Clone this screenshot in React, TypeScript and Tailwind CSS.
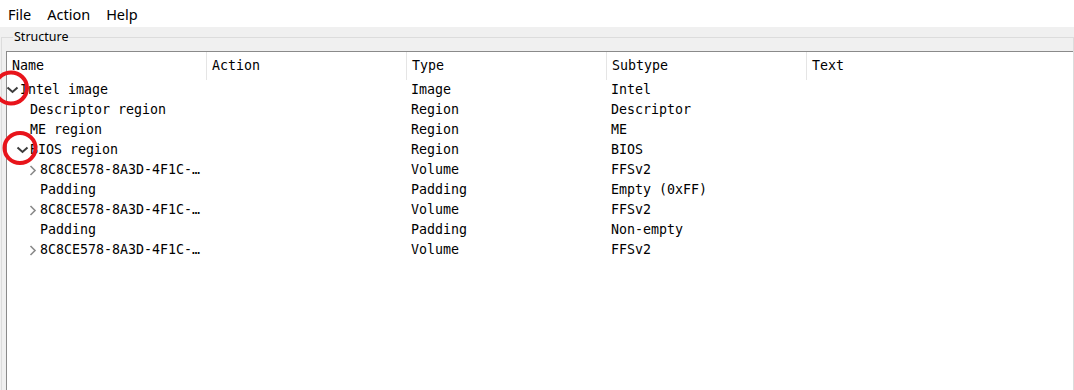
import React from "react";

type Row = {
  name: string;
  level: number;
  arrow?: "down" | "right";
  type: string;
  subtype: string;
};

const rows: Row[] = [
  { name: "Intel image", level: 0, arrow: "down", type: "Image", subtype: "Intel" },
  { name: "Descriptor region", level: 1, type: "Region", subtype: "Descriptor" },
  { name: "ME region", level: 1, type: "Region", subtype: "ME" },
  { name: "BIOS region", level: 1, arrow: "down", type: "Region", subtype: "BIOS" },
  { name: "8C8CE578-8A3D-4F1C-…", level: 2, arrow: "right", type: "Volume", subtype: "FFSv2" },
  { name: "Padding", level: 2, type: "Padding", subtype: "Empty (0xFF)" },
  { name: "8C8CE578-8A3D-4F1C-…", level: 2, arrow: "right", type: "Volume", subtype: "FFSv2" },
  { name: "Padding", level: 2, type: "Padding", subtype: "Non-empty" },
  { name: "8C8CE578-8A3D-4F1C-…", level: 2, arrow: "right", type: "Volume", subtype: "FFSv2" },
];

const columns = ["Name", "Action", "Type", "Subtype"];

function Chevron({ dir }: { dir: "down" | "right" }) {
  if (dir === "down") {
    return (
      <svg width="13" height="8" viewBox="0 0 13 8" className="block">
        <path d="M1.5 1.5 L6.5 6 L11.5 1.5" fill="none" stroke="#3c3c3c" strokeWidth="2" />
      </svg>
    );
  }
  return (
    <svg width="8" height="11" viewBox="0 0 8 11" className="block">
      <path d="M1.5 1 L6 5.5 L1.5 10" fill="none" stroke="#8a8a8a" strokeWidth="1.6" />
    </svg>
  );
}

export default function App() {
  return (
    <div className="relative w-[1074px] h-[390px] overflow-hidden bg-white flex flex-col text-black">
      {/* Menu bar */}
      <div className="h-[27px] shrink-0 flex items-center bg-white font-['Noto_Sans',sans-serif] text-[14.5px] pt-[2px]">
        <span className="px-[8px]">File</span>
        <span className="px-[8px]">Action</span>
        <span className="px-[8px]">Help</span>
      </div>

      {/* Group box */}
      <div className="flex-1 bg-[#f0f0f0] pl-[1px]">
        <fieldset className="h-[400px] border border-[#dcdcdc] pl-[4px] pt-[4px] min-w-0">
          <legend className="ml-[7px] px-[1px] leading-[20px] text-[12.5px] font-['Noto_Sans',sans-serif]">
            Structure
          </legend>

          {/* Tree widget */}
          <div className="h-[400px] bg-white border-l border-t border-[#8a8a8a] font-['DejaVu_Sans_Mono',monospace] text-[13.3px]">
            <div className="flex h-[28px]">
              {columns.map((c) => (
                <div
                  key={c}
                  className="w-[200px] shrink-0 h-full border-r border-[#e5e5e5] pl-[5px] flex items-center"
                >
                  {c}
                </div>
              ))}
              <div className="w-[200px] shrink-0 h-full pl-[5px] flex items-center">Text</div>
            </div>

            {rows.map((r, i) => (
              <div key={i} className="flex h-[20px] items-center whitespace-pre">
                <div className="w-[200px] shrink-0 flex items-center">
                  <div
                    className="flex items-center justify-center w-[13px] h-[20px]"
                    style={{ marginLeft: r.level * 10 - 1 }}
                  >
                    {r.arrow && <Chevron dir={r.arrow} />}
                  </div>
                  <span className="ml-[1px]">{r.name}</span>
                </div>
                <div className="w-[200px] shrink-0" />
                <div className="w-[200px] shrink-0 pl-[4px]">{r.type}</div>
                <div className="w-[200px] shrink-0 pl-[4px]">{r.subtype}</div>
              </div>
            ))}
          </div>
        </fieldset>
      </div>

      {/* Red annotation circles */}
      <svg className="absolute left-0 top-0 pointer-events-none" width="60" height="180">
        <ellipse cx="11" cy="88" rx="16" ry="15.5" fill="none" stroke="#e8141b" strokeWidth="4" />
        <ellipse cx="20" cy="148" rx="15.5" ry="15" fill="none" stroke="#e8141b" strokeWidth="4" />
      </svg>
    </div>
  );
}
